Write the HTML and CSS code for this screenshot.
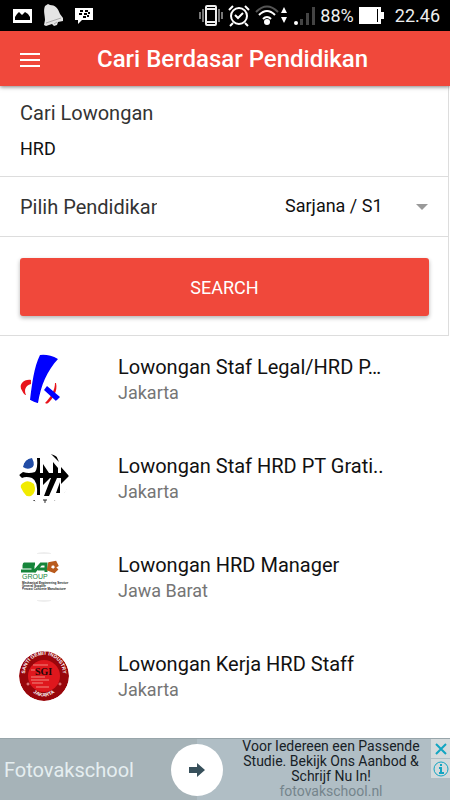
FILE: index.html
```html
<!DOCTYPE html>
<html lang="id">
<head>
<meta charset="utf-8">
<meta name="viewport" content="width=device-width, initial-scale=1">
<title>Cari Berdasar Pendidikan</title>
<link rel="stylesheet" href="styles.css">
</head>
<body>
<div class="status">
  <div class="status-left">
    <svg width="19" height="16" viewBox="0 0 19 16"><path fill="#fff" d="M0 1h19v14H0z"/><path fill="#000" d="M2 12V9l2-3 2-2 3 3 3-3 3 2 2 3v3z"/></svg>
    <svg width="21" height="23" viewBox="0 0 21 23"><path fill="#e4e4e4" d="M2 2l3-2 2 1c5 0 8 3 10 9l3 4v3l-5 1-1 3-3 1-2-2-6 2-2-1 1-5C2 11 0 7 2 2z"/><path stroke="#aaa" fill="none" d="M3 19l15-5M11 20l3-2"/></svg>
    <svg width="18" height="18" viewBox="0 0 18 18"><path fill="#fff" d="M0 1h18v12H7l-4 4v-4H0z"/><path stroke="#000" stroke-width="2" fill="none" d="M5 4h3M10 4h3M4 7h3M9 7h3M13 6h2M8 10h3M12 9h2"/></svg>
  </div>
  <div class="status-right">
    <svg width="24" height="21" viewBox="0 0 24 21" fill="none" stroke="#eee" stroke-width="2"><rect x="7" y="1" width="10" height="19" rx="1"/><path d="M8 4h8M8 17h8"/><path stroke-width="1" d="M4 4v13M20 4v13M1 7v7M23 7v7"/></svg>
    <svg width="22" height="22" viewBox="0 0 22 22" fill="none" stroke="#fff" stroke-width="2"><circle cx="11" cy="11" r="8"/><path d="M7 10l3 3 5-5M1 5l4-4M17 1l4 4M5 18l-3 3M17 18l3 3"/></svg>
    <svg class="wifi" width="34" height="21" viewBox="0 0 34 21" fill="none" stroke-width="2"><path stroke="#555" d="M1 7Q12-4 23 7"/><path stroke="#fff" d="M4 10q8-8 16 0M8 14q4-4 8 0"/><circle cx="12" cy="17" r="3" fill="#fff"/><path fill="#fff" d="M26 8l3-6 3 6zM26 12l3 6 3-6z"/></svg>
    <svg width="21" height="19" viewBox="0 0 21 19"><circle cx="2" cy="17" r="2" fill="#fff"/><path fill="#444" d="M6 13h3v6H6zM12 7h3v12h-3zM18 1h3v18h-3z"/></svg>
    <span class="percent">88%</span>
    <svg width="25" height="17" viewBox="0 0 25 17"><path fill="#fff" d="M0 0h22v5h3v7h-3v5H0z"/><path fill="#000" d="M18 2h1v13h-1z"/></svg>
    <span class="clock">22.46</span>
  </div>
</div>
<header class="bar">
  <button class="menu" aria-label="Menu"><svg width="20" height="14" viewBox="0 0 20 14"><path stroke="#fff" stroke-width="2" d="M0 1h20M0 7h20M0 13h20"/></svg></button>
  <h1>Cari Berdasar Pendidikan</h1>
</header>
<form class="search">
  <div class="field">
    <label for="job">Cari Lowongan</label>
    <input id="job" type="text" value="HRD">
  </div>
  <div class="field choice">
    <label for="edu">Pilih Pendidikan</label>
    <div class="select">
      <select id="edu"><option>Sarjana / S1</option></select>
      <svg width="12" height="6" viewBox="0 0 12 6"><path fill="#999" d="M0 0h12L6 6z"/></svg>
    </div>
  </div>
  <div class="action"><button type="button">SEARCH</button></div>
</form>
<main>
  <ul class="jobs">
    <li>
      <svg class="logo" viewBox="0 0 50 50"><path fill="#e8141c" d="M12 26C5 25 0 30 2 36c1 3 3 5 5 5-2-5-1-9 5-11zM36 29c0 7-4 14-10 20l2 1c6-5 11-13 9-21z"/><path fill="#00f" d="M21 1q9-1 18 4C28 17 22 31 19 49q-4 1-8-3C13 30 15 13 21 1zM28 32l13 11-4 4-12-11z"/></svg>
      <div><h2>Lowongan Staf Legal/HRD P…</h2><p>Jakarta</p></div>
    </li>
    <li>
      <svg class="logo" viewBox="0 0 50 50"><path fill="#000" d="M0 22l4-3q6 2 12 0 3-4 2-14h3v15h3v-9l6 9h4V9l5 6v5h3v-6l8 9-8 8v-6h-4L30 43h-5l7-18h-1l-7 7v-7h-3v17h-3q1-14-5-17-6-2-10 0zM32 1l4-1 4 9zM41 29v11h-4z"/><path fill="#214ca5" d="M4 14Q5 6 13 5q4 8-1 10-4 2-8-1z"/><path fill="#f1eb00" d="M2 32q6-7 13-1 3 8-3 12-6 1-9-3-3-4-1-8z"/><path stroke="#222" fill="none" d="M14 49l1-2 1 2M24 47h4M26 47v3M36 47v2M46 40l3-5"/></svg>
      <div><h2>Lowongan Staf HRD PT Grati..</h2><p>Jakarta</p></div>
    </li>
    <li>
      <svg class="logo" viewBox="0 0 50 50"><path stroke="#ddd" fill="none" d="M18 1h14M18 49h14"/><path stroke="#16853a" stroke-width="3" fill="none" d="M16 12H5v3h9v4H2M15 20l7-8h5v8M19 17h8"/><path stroke="#b95b1d" stroke-width="4" fill="none" d="M38 15l-2-4-5 1-1 5 5 2 3-3"/><g font-family="Liberation Sans"><text x="3" y="27" font-size="7" fill="#16853a">GROUP</text><g font-size="3" font-weight="bold" fill="#222"><text x="3" y="32">Mechanical Engineering Services</text><text x="3" y="35">General Supplier</text><text x="3" y="38">Precast Concrete Manufacturer</text></g></g></svg>
      <div><h2>Lowongan HRD Manager</h2><p>Jawa Barat</p></div>
    </li>
    <li>
      <svg class="logo" viewBox="0 0 50 50"><defs><path id="top" d="M7 29a19 19 0 1 1 36 0"/><path id="base" d="M9 37q16 17 32 0"/></defs><circle cx="25" cy="25" r="25" fill="#99060b"/><circle cx="25" cy="25" r="16" fill="#df171d"/><path stroke="#f08a80" fill="none" d="M14 14h15M12 19h4M12 26h14M12 29h18M13 32h11M17 36h13"/><g font-family="Liberation Sans" font-size="5" font-weight="bold" fill="#fff" text-anchor="middle"><text><textPath href="#top" startOffset="50%">SANTI GEMIT INDUSTRY</textPath></text><text><textPath href="#base" startOffset="50%">JAKARTA</textPath></text></g><text x="16" y="24" font-family="Liberation Serif" font-size="10" font-weight="bold" fill="#210707">SGI</text><g fill="none" stroke="#e99"><circle cx="9" cy="33" r="1"/><circle cx="41" cy="33" r="1"/></g></svg>
      <div><h2>Lowongan Kerja HRD Staff</h2><p>Jakarta</p></div>
    </li>
  </ul>
</main>
<aside class="ad">
  <div class="brand">Fotovakschool</div>
  <button class="go" aria-label="Open"><svg width="16" height="14" viewBox="0 0 16 14"><path fill="#37505b" d="M0 4h8V0l8 7-8 7v-4H0z"/></svg></button>
  <p class="copy">Voor Iedereen een Passende Studie. Bekijk Ons Aanbod &amp; Schrijf Nu In!<a href="#">fotovakschool.nl</a></p>
  <div class="ad-tools">
    <button aria-label="Close"><svg width="12" height="12" viewBox="0 0 12 12"><path stroke="#13a5c2" stroke-width="2" d="M1 1l10 10M11 1L1 11"/></svg></button>
    <button aria-label="Info"><svg width="16" height="16" viewBox="0 0 16 16" fill="none" stroke="#13a5c2"><circle cx="8" cy="8" r="7"/><path stroke-width="2" d="M8 3v2M6 7h2v5M6 12h5"/></svg></button>
  </div>
</aside>
</body>
</html>
```
FILE: styles.css
```css
* { box-sizing: border-box; }
body {
  margin: 0;
  min-height: 100vh;
  display: flex;
  flex-direction: column;
  background: #fff;
  color: #111;
  font-family: Roboto, sans-serif;
}
h1, h2, p, ul { margin: 0; padding: 0; }
button { border: 0; padding: 0; font: inherit; }
svg { display: block; flex: none; }

.status {
  height: 31px;
  padding: 0 10px 0 13px;
  display: flex;
  align-items: center;
  justify-content: space-between;
  background: #000;
  color: #eee;
}
.status-left, .status-right { display: flex; align-items: center; }
.status-left { gap: 11px; }
.status-right { gap: 5px; }
.percent { font-size: 18px; }
.clock { margin-left: 6px; font-size: 18px; }

.bar {
  position: relative;
  height: 55px;
  padding-left: 20px;
  display: flex;
  align-items: center;
  gap: 57px;
  background: #f0483b;
  color: #fff;
  box-shadow: 0 1px 4px rgba(0, 0, 0, .5);
}
.menu { background: none; }
.menu svg { margin-top: 2px; }
h1 { font-size: 24px; font-weight: 500; line-height: 28px; white-space: nowrap; }

.search {
  margin-right: 1px;
  border: solid #ddd;
  border-width: 0 1px 1px 0;
}
.field { padding: 0 20px; border-bottom: 1px solid #ddd; }
.field label { display: block; color: #333; font-size: 20px; line-height: 24px; }
.field:first-child { padding-top: 15px; height: 91px; }
.field input {
  width: 100%;
  height: 24px;
  margin-top: 11px;
  padding: 0;
  border: 0;
  background: none;
  color: #111;
  font: 18px Roboto, sans-serif;
}
.choice {
  height: 60px;
  display: flex;
  align-items: center;
  justify-content: space-between;
}
.choice label { width: 137px; overflow: hidden; white-space: nowrap; }
.select { display: flex; align-items: center; gap: 33px; }
select {
  appearance: none;
  padding: 0 0 3px;
  border: 0;
  background: none;
  color: #111;
  font: 18px Roboto, sans-serif;
}
.action { padding: 21px 19px 19px 20px; }
.action button {
  width: 100%;
  height: 58px;
  border-radius: 3px;
  background: #f0483b;
  color: #fff;
  font-size: 18px;
  box-shadow: 0 2px 4px rgba(0, 0, 0, .3);
}

main { flex: 1; }
.jobs { list-style: none; }
.jobs li {
  height: 99px;
  padding: 18px 60px 0 19px;
  display: grid;
  grid-template-columns: 50px minmax(0, 1fr);
  column-gap: 49px;
  align-items: start;
}
.logo { width: 50px; height: 50px; border-radius: 50%; }
h2 {
  overflow: hidden;
  color: #111;
  font-size: 20px;
  font-weight: 400;
  line-height: 26px;
  text-overflow: ellipsis;
  white-space: nowrap;
}
.jobs p { color: #757575; font-size: 18px; line-height: 26px; }

.ad {
  height: 62px;
  display: grid;
  grid-template-columns: 171px 52px minmax(0, 1fr) 19px;
  align-items: center;
  border-top: 1px solid #98a5aa;
  background: linear-gradient(90deg, #a6b3b8 197px, #b0bec5 197px);
}
.brand { padding-left: 4px; color: #e5eef0; font-size: 20px; }
.go {
  width: 52px;
  height: 52px;
  display: grid;
  place-items: center;
  border-radius: 50%;
  background: #fff;
}
.copy { padding: 0 8px 2px 16px; color: #172126; font-size: 14px; line-height: 15px; text-align: center; }
.copy a { display: block; color: #75858c; text-decoration: none; }
.ad-tools { align-self: start; display: grid; gap: 1px; }
.ad-tools button {
  height: 19px;
  display: grid;
  place-items: center;
  background: #d4dadc;
}
```
